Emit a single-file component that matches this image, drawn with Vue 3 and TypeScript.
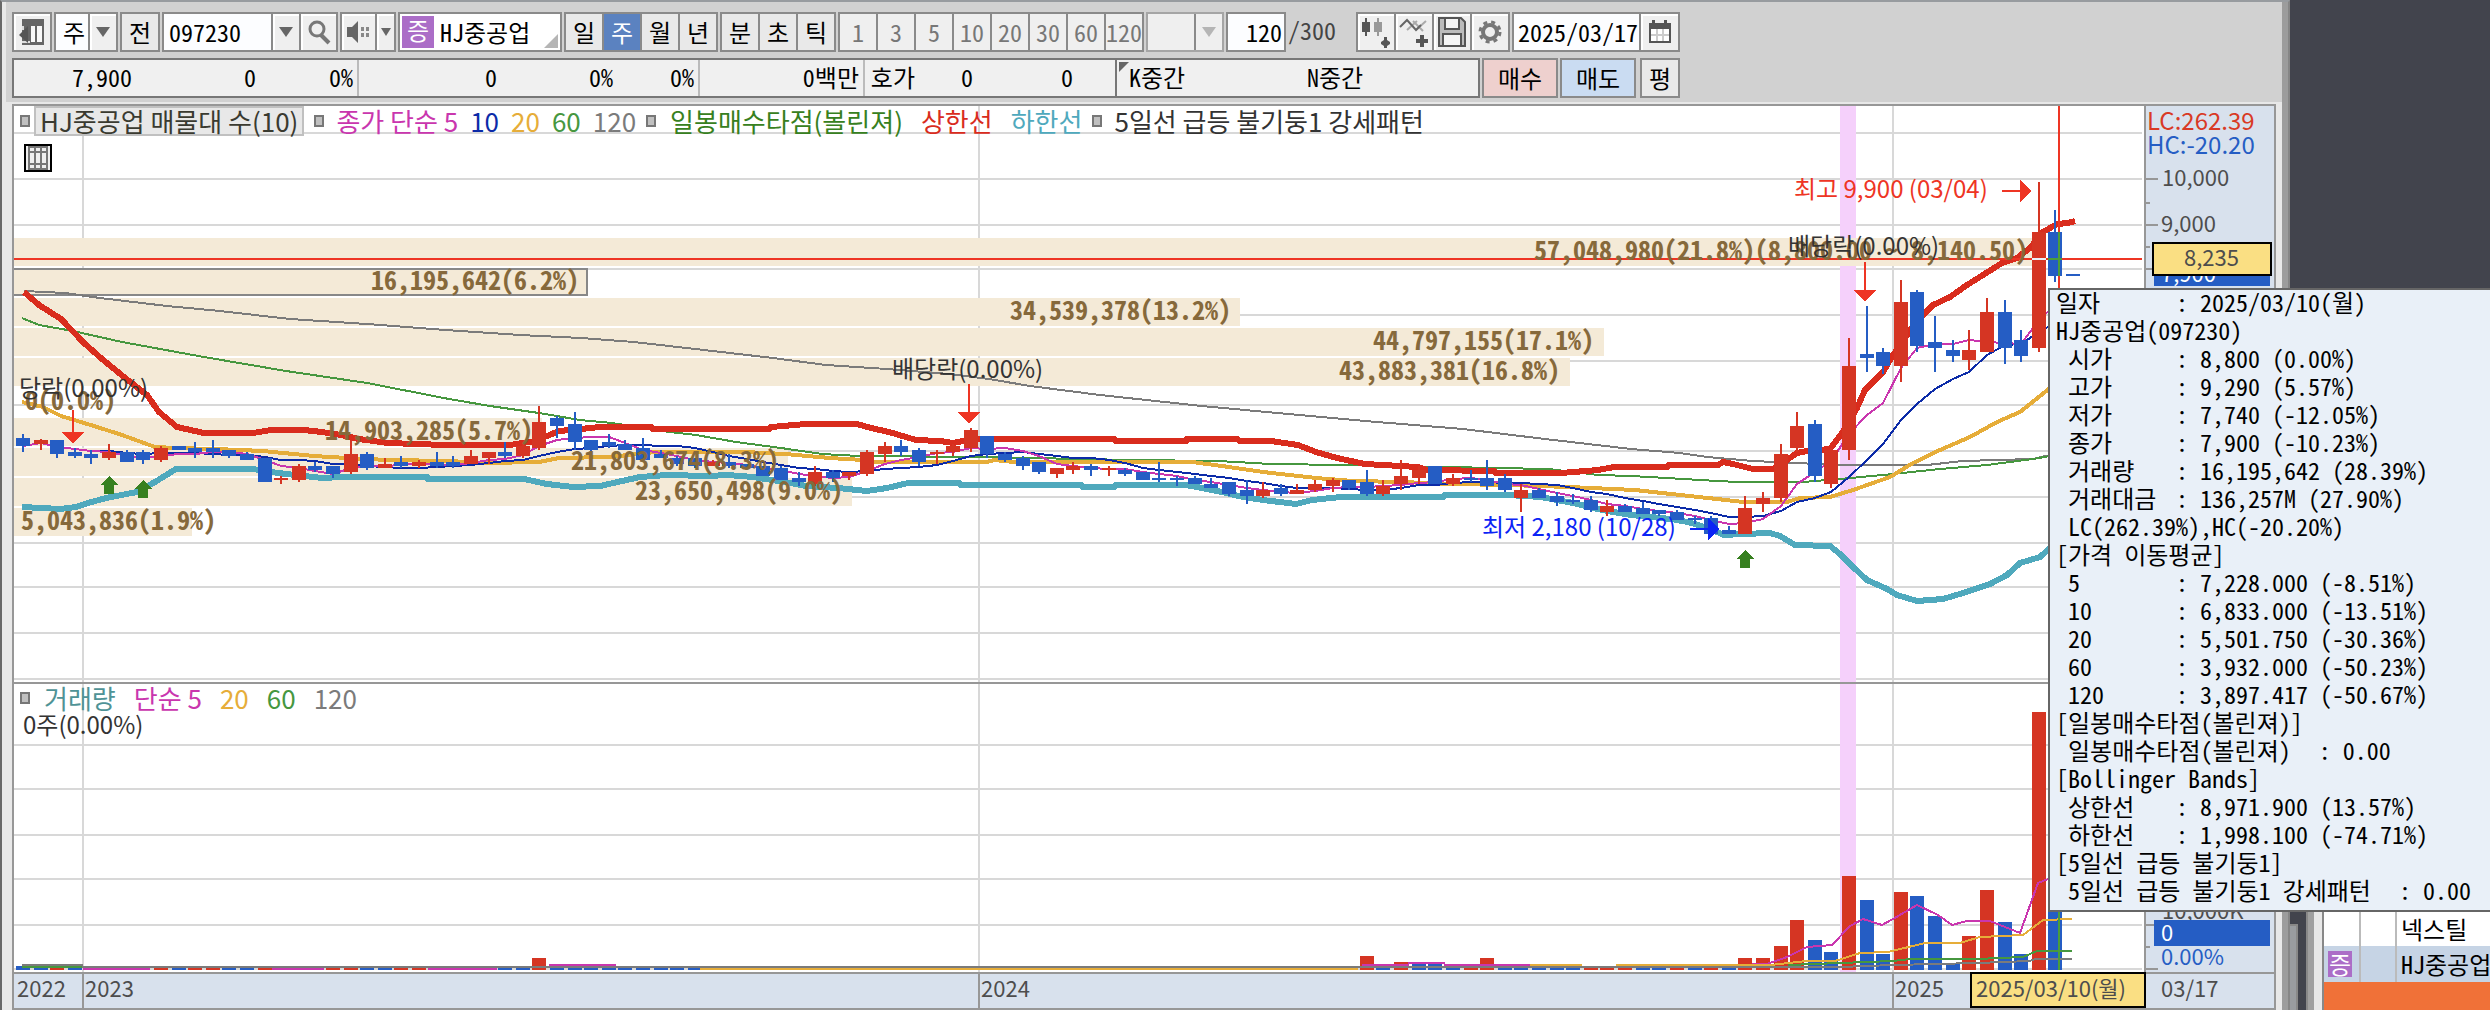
<script setup lang="ts">
import { ref } from 'vue'

type Candle = [high: number, top: number, bottom: number, low: number, up: 0 | 1]
interface Series { color: string; width: number; points: string }

const code = ref('097230')
const barCount = ref('120')
const endDate = ref('2025/03/17')

const periods = ['일', '주', '월', '년']
const intraday = ['분', '초', '틱']
const minutes = ['1', '3', '5', '10', '20', '30', '60', '120']

/* Weekly candles in chart units: high, body top, body bottom, low, rising flag */
const candles: Candle[] = [
  [434, 438, 446, 452, 0], [439, 440, 444, 450, 1], [440, 440, 454, 458, 0], [448, 452, 456, 458, 0],
  [450, 454, 458, 464, 0], [444, 452, 458, 460, 1], [450, 452, 462, 462, 0], [450, 452, 460, 464, 0],
  [446, 448, 460, 462, 1], [446, 446, 450, 450, 0], [442, 448, 452, 458, 0], [440, 448, 452, 458, 0],
  [450, 450, 456, 458, 0], [452, 454, 460, 460, 0], [458, 458, 482, 482, 0], [476, 478, 480, 484, 1],
  [464, 466, 480, 482, 1], [462, 466, 470, 472, 0], [466, 466, 474, 478, 0], [440, 454, 472, 474, 1],
  [452, 454, 468, 470, 0], [458, 464, 468, 468, 1], [456, 462, 466, 468, 0], [460, 462, 466, 468, 1],
  [452, 462, 466, 468, 0], [456, 462, 466, 468, 0], [450, 456, 464, 464, 1], [452, 452, 458, 464, 1],
  [442, 452, 456, 458, 0], [444, 446, 456, 458, 1], [406, 422, 448, 450, 1], [416, 418, 426, 438, 0],
  [412, 424, 442, 450, 0], [440, 440, 450, 458, 0], [434, 442, 446, 448, 0], [440, 444, 450, 450, 0],
  [438, 448, 460, 460, 0], [450, 454, 458, 458, 0], [456, 458, 464, 466, 0], [458, 458, 466, 468, 0],
  [460, 462, 466, 466, 1], [454, 462, 466, 468, 0], [464, 464, 468, 468, 0], [466, 466, 476, 476, 0],
  [466, 468, 480, 480, 0], [472, 478, 482, 486, 0], [466, 472, 484, 486, 1], [470, 472, 478, 482, 0],
  [472, 472, 476, 480, 1], [450, 452, 474, 476, 1], [442, 446, 454, 462, 1], [440, 446, 452, 456, 0],
  [448, 450, 462, 466, 0], [450, 452, 454, 464, 1], [444, 446, 452, 456, 1], [428, 430, 448, 452, 1],
  [436, 436, 454, 458, 0], [452, 454, 460, 462, 0], [456, 458, 466, 470, 0], [462, 462, 472, 474, 0],
  [468, 468, 474, 478, 1], [462, 466, 470, 474, 1], [464, 466, 470, 476, 0], [466, 468, 470, 476, 1],
  [468, 470, 474, 476, 0], [472, 472, 480, 480, 0], [462, 478, 480, 482, 0], [476, 478, 480, 486, 0],
  [476, 478, 484, 484, 0], [478, 484, 488, 488, 0], [482, 482, 494, 496, 0], [480, 490, 496, 504, 0],
  [482, 490, 496, 498, 1], [484, 488, 494, 496, 0], [484, 490, 494, 494, 1], [480, 484, 490, 492, 1],
  [478, 480, 486, 492, 1], [480, 480, 488, 490, 0], [470, 482, 494, 496, 0], [480, 486, 494, 496, 1],
  [460, 476, 484, 490, 1], [466, 470, 478, 484, 1], [466, 466, 484, 484, 0], [474, 478, 484, 486, 1],
  [470, 478, 480, 482, 0], [460, 478, 486, 490, 0], [474, 478, 490, 492, 0], [484, 490, 498, 512, 1],
  [488, 490, 498, 498, 0], [492, 496, 502, 506, 0], [494, 500, 502, 504, 0], [496, 500, 510, 512, 0],
  [500, 506, 512, 516, 1], [504, 506, 512, 512, 0], [502, 508, 514, 514, 0], [510, 510, 514, 516, 0],
  [510, 512, 520, 520, 0], [516, 518, 520, 524, 0], [516, 518, 534, 534, 0], [526, 530, 534, 534, 0],
  [496, 508, 534, 534, 1], [492, 498, 504, 512, 1], [444, 454, 498, 502, 1], [412, 426, 448, 452, 1],
  [420, 424, 476, 482, 0], [448, 450, 484, 488, 1], [338, 366, 450, 460, 1], [306, 354, 358, 372, 0],
  [348, 352, 366, 374, 0], [280, 302, 366, 382, 1], [290, 292, 346, 352, 0], [316, 342, 348, 372, 0],
  [340, 350, 356, 362, 0], [330, 350, 360, 370, 1], [298, 312, 352, 352, 1], [300, 312, 348, 364, 0],
  [330, 340, 356, 362, 0], [182, 232, 348, 352, 1], [210, 232, 276, 282, 0], [274, 274, 276, 276, 0],
]

const centre = (i: number): number => 2 * Math.floor((23 + 17.227 * i) / 2) + 1
const closes = candles.map((c) => (c[4] ? c[1] : c[2]))

function movingAverage(span: number): string {
  return closes
    .slice(0, 119)
    .map((_, i) => {
      const part = closes.slice(Math.max(0, i - span + 1), i + 1)
      return `${centre(i)},${Math.round(part.reduce((a, b) => a + b, 0) / part.length)}`
    })
    .join(' ')
}

const volumeTops: Record<number, number> = {
  0: 966, 30: 958, 78: 956, 80: 962, 81: 964, 82: 964, 85: 958, 100: 958, 101: 958, 102: 946, 103: 920,
  104: 940, 105: 952, 106: 876, 107: 900, 108: 954, 109: 892, 110: 896, 111: 916, 112: 964, 113: 936,
  114: 890, 115: 922, 116: 954, 117: 712, 118: 880,
}
/* Weeks whose volume moved against the price */
const diverging = new Set([1, 2, 10, 11, 14, 18, 21, 22, 29, 78, 79, 81, 83, 84, 85, 87, 91, 93, 96, 98, 105])
const volumes = candles.slice(0, 119).map((c, i) => ({
  x: centre(i),
  top: volumeTops[i] ?? 968,
  up: diverging.has(i) ? !c[4] : !!c[4],
}))

const thinLines: Series[] = [
  { color: '#7b7b7b', width: 2, points: '24,291 65,293 100,298 167,306 220,311 290,319 367,324 445,330 520,335 581,338 634,342 704,350 773,358 826,365 887,369 949,374 989,379 1030,386 1100,395 1202,406 1288,414 1365,421 1463,429 1545,439 1631,449 1680,453 1707,457 1753,461 1840,465 1927,465 1963,461 2033,459 2050,455' },
  { color: '#46973f', width: 2, points: '22,318 39,325 73,331 122,342 204,357 286,371 367,383 449,399 490,406 539,413 580,420 612,423 669,432 696,435 736,442 781,448 822,454 859,456 969,457 1030,458 1132,460 1218,461 1271,464 1345,465 1447,467 1496,468 1549,469 1598,475 1631,476 1667,478 1700,480 1737,482 1803,482 1840,479 1893,474 1940,469 1987,465 2033,459 2050,456' },
  { color: '#e6ad39', width: 4, points: '22,402 43,407 61,416 94,426 122,435 155,447 176,448 216,449 263,451 314,456 347,458 388,460 449,461 486,463 539,462 559,458 610,457 655,452 745,452 785,454 830,458 863,460 875,462 987,462 994,460 1014,462 1192,462 1222,466 1263,472 1316,478 1353,481 1402,482 1451,484 1508,485 1569,487 1635,490 1671,494 1717,499 1743,502 1787,502 1800,498 1830,497 1853,490 1890,477 1913,463 1940,450 1970,437 1997,422 2020,412 2050,388' },
]
const bands: Series[] = [
  { color: '#d92c1d', width: 6, points: '24,292 39,305 61,319 84,343 102,359 124,377 147,395 159,412 177,427 204,433 253,433 271,430 304,430 322,432 341,435 359,439 388,443 445,445 510,445 535,441 559,431 581,429 600,427 651,427 653,429 769,429 771,427 806,424 857,424 871,428 889,432 916,440 940,441 953,443 973,439 1114,439 1116,441 1186,441 1187,439 1237,439 1240,441 1271,441 1298,445 1316,452 1337,458 1365,464 1418,467 1427,470 1494,471 1496,473 1561,473 1598,470 1614,467 1667,467 1669,465 1718,465 1723,462 1733,464 1753,469 1773,469 1787,460 1797,453 1807,451 1830,449 1842,433 1850,420 1857,408 1865,390 1883,372 1893,355 1902,343 1910,330 1925,313 1933,305 1950,297 1967,285 1983,275 2002,263 2017,258 2030,248 2043,232 2057,224 2068,223 2075,221' },
  { color: '#4fa9bd', width: 6, points: '22,507 60,509 76,507 88,503 106,498 137,492 155,482 176,469 253,469 278,473 322,478 342,477 427,477 428,479 524,479 547,484 573,487 600,486 622,481 640,477 667,475 708,476 728,475 753,477 785,482 806,486 838,488 867,491 887,488 908,483 959,483 961,485 1081,485 1083,487 1114,487 1116,485 1186,485 1202,488 1222,492 1243,497 1263,500 1296,504 1312,500 1341,497 1443,497 1445,495 1508,495 1541,497 1573,503 1602,510 1631,515 1671,519 1688,522 1708,528 1724,535 1742,534 1770,533 1780,536 1795,545 1830,546 1840,554 1853,567 1867,580 1887,589 1897,595 1917,601 1943,599 1963,593 1990,584 2007,575 2020,563 2040,557 2050,548' },
]
const volumeLines: Series[] = [
  { color: '#c936ae', width: 2, points: '83,969 150,969' },
  { color: '#c936ae', width: 2, points: '272,969 324,969' },
  { color: '#c936ae', width: 2, points: '428,969 497,969' },
  { color: '#c936ae', width: 2, points: '549,965 616,965' },
  { color: '#e6ad39', width: 2, points: '700,969 1358,969' },
  { color: '#c936ae', width: 2, points: '1362,965 1408,965 1409,963 1444,963 1445,965 1530,965' },
  { color: '#e6ad39', width: 2, points: '1530,965 1582,965' },
  { color: '#c936ae', width: 2, points: '1737,965 1767,964 1787,957 1807,947 1832,945 1850,926 1863,919 1882,925 1893,919 1917,905 1938,915 1952,925 1967,921 1990,921 2020,933 2038,883 2048,879' },
  { color: '#e6ad39', width: 2, points: '1616,965 1770,965 1807,961 1835,961 1860,953 1888,952 1925,943 1960,943 1980,937 2023,935 2043,920 2072,919' },
  { color: '#46973f', width: 2, points: '22,967 82,967' },
  { color: '#46973f', width: 2, points: '1788,965 1840,963 1893,961 1910,959 1977,959 2023,957 2037,951 2072,951' },
  { color: '#7b7b7b', width: 2, points: '22,965 82,965 83,967 1840,967 1893,965 1977,963 2030,961 2035,959 2072,959' },
]

const priceGrid = [133, 179, 225, 269, 315, 361, 405, 451, 497, 543, 587, 633, 679]
const volumeGrid = [745, 789, 835, 879, 925, 969]
const years = [{ x: 83, label: '2023' }, { x: 979, label: '2024' }, { x: 1893, label: '2025' }]

const profile = [
  { y: 238, right: 2040, textX: 2028, label: '57,048,980(21.8%)(8,800.00 ~ 8,140.50)' },
  { y: 268, right: 588, textX: 579, label: '16,195,642(6.2%)', current: true },
  { y: 298, right: 1240, textX: 1231, label: '34,539,378(13.2%)' },
  { y: 328, right: 1604, textX: 1594, label: '44,797,155(17.1%)' },
  { y: 358, right: 1570, textX: 1560, label: '43,883,381(16.8%)' },
  { y: 388, right: 14, textX: 116, label: '0(0.0%)' },
  { y: 418, right: 542, textX: 533, label: '14,903,285(5.7%)' },
  { y: 448, right: 788, textX: 779, label: '21,803,674(8.3%)' },
  { y: 478, right: 852, textX: 843, label: '23,650,498(9.0%)' },
  { y: 508, right: 192, textX: 216, label: '5,043,836(1.9%)' },
]
const dividends = [
  { x: 73, y: 410, tip: 444, textX: 19, textY: 397, label: '당락(0.00%)' },
  { x: 969, y: 384, tip: 424, textX: 892, textY: 378, label: '배당락(0.00%)' },
  { x: 1865, y: 262, tip: 302, textX: 1788, textY: 255, label: '배당락(0.00%)' },
]
const buySignals = [{ x: 109, y: 476 }, { x: 143, y: 480 }, { x: 1745, y: 550 }]

const details: { label: string; value?: string; head?: boolean; free?: boolean }[] = [
  { label: '일자', value: '2025/03/10(월)', head: true },
  { label: 'HJ중공업(097230)', head: true },
  { label: '시가', value: '8,800 (0.00%)' },
  { label: '고가', value: '9,290 (5.57%)' },
  { label: '저가', value: '7,740 (-12.05%)' },
  { label: '종가', value: '7,900 (-10.23%)' },
  { label: '거래량', value: '16,195,642 (28.39%)' },
  { label: '거래대금', value: '136,257M (27.90%)' },
  { label: 'LC(262.39%),HC(-20.20%)' },
  { label: '[가격 이동평균]', head: true },
  { label: '5', value: '7,228.000 (-8.51%)' },
  { label: '10', value: '6,833.000 (-13.51%)' },
  { label: '20', value: '5,501.750 (-30.36%)' },
  { label: '60', value: '3,932.000 (-50.23%)' },
  { label: '120', value: '3,897.417 (-50.67%)' },
  { label: '[일봉매수타점(볼린져)]', head: true },
  { label: '일봉매수타점(볼린져)', value: '0.00', free: true },
  { label: '[Bollinger Bands]', head: true },
  { label: '상한선', value: '8,971.900 (13.57%)' },
  { label: '하한선', value: '1,998.100 (-74.71%)' },
  { label: '[5일선 급등 불기둥1]', head: true },
  { label: '5일선 급등 불기둥1 강세패턴', value: '0.00', free: true },
]
</script>

<template>
  <div class="app">
    <main class="window">
      <header class="toolbars">
        <div class="bar">
          <button class="box icon" aria-label="패널 접기">
            <svg width="26" height="28" viewBox="0 0 26 28"><path d="M3 1h22v26H3z" fill="#666" /><path d="M12 8h4v16h-4zM18 8h5v16h-5z" fill="#f8f8f8" /><path d="M3 8h2v4H3zM3 23h8v2H3z" fill="#ddd" /><path d="M0 17l9-9v17z" fill="#555" /></svg>
          </button>
          <div class="box combo">
            <select class="w34" aria-label="시장"><option>주</option></select>
            <button class="arrow" aria-label="시장 목록"><i></i></button>
          </div>
          <button class="box cell">전</button>
          <div class="box combo">
            <input v-model="code" class="code" aria-label="종목코드" />
            <button class="arrow" aria-label="최근 종목"><i></i></button>
            <button class="tool" aria-label="종목 검색">
              <svg width="28" height="28" viewBox="0 0 28 28" fill="none" stroke="#777"><circle cx="12" cy="11" r="7" stroke-width="3" /><path d="M16 17l8 8" stroke-width="4" /></svg>
            </button>
          </div>
          <div class="box combo">
            <button class="tool speaker" aria-label="소리">
              <svg width="28" height="28" viewBox="0 0 28 28" fill="#666"><path d="M2 9h5l6-6v22l-6-6H2z" /><path d="M16 9h3v4h-3zM16 15h3v4h-3zM21 9h3v4h-3zM21 15h3v4h-3z" fill="#888" /></svg>
            </button>
            <button class="arrow small" aria-label="소리 목록"><i></i></button>
          </div>
          <div class="box name"><b class="badge">증</b><span>HJ중공업</span><i class="corner"></i></div>
          <div class="box group">
            <button v-for="p in periods" :key="p" :class="{ on: p === '주' }">{{ p }}</button>
          </div>
          <div class="box group">
            <button v-for="p in intraday" :key="p">{{ p }}</button>
          </div>
          <div class="box group dim">
            <button v-for="m in minutes" :key="m">{{ m }}</button>
          </div>
          <div class="box combo off">
            <select class="w46" aria-label="사용자 주기" disabled><option></option></select>
            <button class="arrow" disabled aria-label="주기 목록"><i></i></button>
          </div>
          <input v-model="barCount" class="box count" aria-label="봉 개수" />
          <span class="total">/300</span>
          <div class="box group icons">
            <button aria-label="차트 추가">
              <svg width="30" height="32" viewBox="0 0 30 32" fill="#555"><path d="M1 6h8v10H1zM4 2h2v18H4z" /><path d="M13 6h8v10h-8zM16 2h2v18h-2z" fill="#999" /><path d="M20 26l3-2v-3h3v3l3 2v2l-3 2v2h-3v-2l-3-2z" /></svg>
            </button>
            <button aria-label="지표 추가">
              <svg width="30" height="32" viewBox="0 0 30 32" fill="none"><path d="M8 14l10-9M14 5l10 10M17 14l10-9" stroke="#aaa" stroke-width="2" /><path d="M1 11l7-7 9 10 5-5" stroke="#666" stroke-width="2" /><path d="M17 23h4v-4h4v4h4v4h-4v4h-4v-4h-4z" fill="#555" /></svg>
            </button>
            <button aria-label="저장">
              <svg width="30" height="32" viewBox="0 0 30 32" fill="#f4f4f4" stroke="#555" stroke-width="2"><path d="M2 2h22l4 4v24H2z" fill="#bbb" /><path d="M8 2h14v11H8zM6 18h18v12H6z" /></svg>
            </button>
            <button aria-label="설정">
              <svg width="30" height="32" viewBox="0 0 30 32" fill="none" stroke="#777"><circle cx="15" cy="16" r="7" stroke-width="4" /><circle cx="15" cy="16" r="10" stroke-width="3" stroke-dasharray="4 4" /></svg>
            </button>
          </div>
          <div class="box combo">
            <input v-model="endDate" class="date" aria-label="기준일" />
            <button class="tool calendar" aria-label="달력">
              <svg width="26" height="28" viewBox="0 0 26 28"><path d="M2 5h22v20H2z" fill="#555" /><path d="M5 2h3v4H5zM17 2h3v4h-3z" fill="#555" /><path d="M4 11h18v12H4z" fill="#fff" /><path d="M4 16h18v2H4zM9 11h2v12H9zM15 11h2v12h-2z" fill="#ccc" /></svg>
            </button>
          </div>
        </div>

        <div class="bar">
          <div class="box quote">
            <span class="q1">7,900</span><span class="q2">0</span><span class="q3">0%</span>
            <span class="q4">0</span><span class="q5">0%</span><span class="q6">0%</span>
            <span class="q7">0백만</span><span class="q8">호가</span><span class="q9">0</span><span class="q10">0</span>
            <span class="q11">K중간</span><span class="q12">N중간</span>
          </div>
          <button class="box order buy">매수</button>
          <button class="box order sell">매도</button>
          <button class="box cell avg">평</button>
        </div>
      </header>

      <section class="chart">
        <svg class="plot" viewBox="14 106 2260 902" shape-rendering="crispEdges">
          <rect x="14" y="106" width="2130" height="866" fill="#fff" />
          <rect x="2146" y="106" width="128" height="902" fill="#d8e1ed" />
          <rect x="14" y="974" width="2132" height="34" fill="#d8e1ed" />
          <g fill="#d8d8d8">
            <rect v-for="y in priceGrid" :key="y" x="14" :y="y - 1" width="2128" height="2" />
            <rect v-for="y in volumeGrid" :key="y" x="14" :y="y - 1" width="2128" height="2" />
            <rect v-for="t in years" :key="t.x" :x="t.x - 1" y="106" width="2" height="866" />
          </g>
          <rect x="1840" y="106" width="16" height="866" fill="#f5d0fb" />
          <template v-for="b in profile" :key="b.y">
            <rect x="14" :y="b.y" :width="b.right - 14" height="28" fill="#f4ead7" />
            <path v-if="b.current" :d="`M14 ${b.y + 1}H${b.right - 1}V${b.y + 27}H14`" fill="none" stroke="#888" stroke-width="2" />
          </template>

          <g fill="none">
            <polyline v-for="s in thinLines" :key="s.color" :points="s.points" :stroke="s.color" :stroke-width="s.width" />
            <polyline :points="movingAverage(10)" stroke="#0c2ba8" stroke-width="2" />
            <polyline :points="movingAverage(5)" stroke="#c936ae" stroke-width="2" />
            <polyline v-for="s in bands" :key="s.color" :points="s.points" :stroke="s.color" :stroke-width="s.width" stroke-linejoin="round" />
          </g>
          <g v-for="(c, i) in candles" :key="i" :fill="c[4] ? '#d53523' : '#255dc4'">
            <rect :x="centre(i) - 1" :y="c[0]" width="2" :height="c[3] - c[0]" />
            <rect :x="centre(i) - 7" :y="c[1]" width="14" :height="c[2] - c[1]" />
          </g>

          <rect v-for="v in volumes" :key="v.x" :x="v.x - 7" :y="v.top" width="14" :height="970 - v.top" :fill="v.up ? '#d53523' : '#255dc4'" />
          <g fill="none">
            <polyline v-for="(s, i) in volumeLines" :key="i" :points="s.points" :stroke="s.color" :stroke-width="s.width" />
          </g>

          <g fill="#ee3524">
            <path v-for="d in dividends" :key="d.x" :d="`M${d.x - 1} ${d.y}h2V${d.tip - 12}h10l-11 12l-11-12h10z`" />
            <path d="M2002 190h18v-10l12 11l-12 11v-10h-18z" />
            <rect x="14" y="258" width="2128" height="2" />
            <rect x="2058" y="106" width="2" height="864" />
          </g>
          <rect x="2032" y="258" width="14" height="2" fill="#e9f0f8" />
          <path d="M2058 232h2v44h-2zM2048 258h14v2h-14zM2058 880h2v90h-2z" fill="#4a9d3c" />
          <path d="M1690 528h18v-10l12 11l-12 11v-10h-18z" fill="#0b24f5" />
          <path v-for="s in buySignals" :key="s.x" :d="`M${s.x} ${s.y}l9 9h-4v9h-10v-9h-4z`" fill="#378020" />

          <g class="volume-text" fill="#86693b" text-anchor="end">
            <text v-for="b in profile" :key="b.label" :x="b.textX" :y="b.y + 22">{{ b.label }}</text>
          </g>
          <g class="note">
            <text v-for="d in dividends" :key="d.x" :x="d.textX" :y="d.textY" fill="#333">{{ d.label }}</text>
            <text x="1794" y="198" fill="#ee3524">최고 9,900 (03/04)</text>
            <text x="1482" y="536" fill="#0b24f5">최저 2,180 (10/28)</text>
            <text x="2147" y="130" fill="#d93a25">LC:262.39</text>
            <text x="2147" y="154" fill="#255dc4">HC:-20.20</text>
          </g>

          <g fill="#979797">
            <rect x="14" y="682" width="2132" height="2" />
            <rect x="14" y="972" width="2260" height="2" />
            <rect x="2144" y="106" width="2" height="902" />
            <rect v-for="t in years" :key="t.x" :x="t.x - 1" y="974" width="2" height="34" />
            <rect v-for="y in [179, 225, 269, 925, 969]" :key="y" x="2146" :y="y - 1" width="12" height="2" />
            <rect v-for="y in [203, 247, 947]" :key="y" x="2146" :y="y - 1" width="4" height="2" />
          </g>
          <g class="axis" fill="#4d4d4d">
            <text x="2162" y="186">10,000</text>
            <text x="2161" y="232">9,000</text>
            <rect x="2154" y="262" width="116" height="24" fill="#255dc4" />
            <text x="2161" y="282" fill="#fff">7,900</text>
            <rect x="2153" y="243" width="118" height="32" fill="#fadf83" stroke="#000" stroke-width="2" />
            <text x="2184" y="266">8,235</text>
            <text x="2162" y="919">10,000K</text>
            <rect x="2154" y="920" width="116" height="26" fill="#255dc4" />
            <text x="2161" y="941" fill="#fff">0</text>
            <text x="2161" y="965" fill="#255dc4">0.00%</text>
            <text x="2161" y="997">03/17</text>
            <text x="17" y="997">2022</text>
            <text v-for="t in years" :key="t.x" :x="t.x + 2" y="997">{{ t.label }}</text>
            <rect x="1971" y="973" width="174" height="34" fill="#fadf83" stroke="#000" stroke-width="2" />
            <text x="1976" y="997">2025/03/10(월)</text>
          </g>
        </svg>

        <div class="legend price">
          <div class="set"><i></i><button class="picked">HJ중공업 매물대 수(10)</button></div>
          <div class="set ma"><i></i><span class="m">종가 단순 5</span><span class="n">10</span><span class="o">20</span><span class="g">60</span><span class="d">120</span></div>
          <div class="set ma wide"><i></i><span class="v">일봉매수타점(볼린져)</span><span class="r">상한선</span><span class="t">하한선</span></div>
          <div class="set ma"><i></i><span class="k">5일선 급등 불기둥1 강세패턴</span></div>
        </div>
        <button class="gridbtn" aria-label="표 보기">
          <svg width="20" height="24" viewBox="0 0 20 24" fill="none" stroke="#777" stroke-width="2"><path d="M1 1h18v22H1zM1 6h18M1 18h18M7 1v22M13 1v22" /></svg>
        </button>
        <div class="legend volume">
          <div class="set ma wide"><i></i><span class="c">거래량</span><span class="m">단순 5</span><span class="o">20</span><span class="g">60</span><span class="d">120</span></div>
          <div class="now">0주(0.00%)</div>
        </div>
      </section>
    </main>

    <aside class="side">
      <div class="gutter"><div class="thumb"></div></div>
      <table class="watch">
        <tbody>
          <tr><td></td><td></td><td>넥스틸</td></tr>
          <tr class="sel"><td><b class="badge">증</b></td><td></td><td>HJ중공업</td></tr>
          <tr class="hot"><td colspan="3"></td></tr>
        </tbody>
      </table>
    </aside>

    <div class="tip" role="tooltip">
      <div v-for="(d, i) in details" :key="i" class="row" :class="{ head: d.head }">
        <span :class="{ label: d.value && !d.free, free: d.free }">{{ d.label }}</span><span v-if="d.value">: {{ d.value }}</span>
      </div>
    </div>
  </div>
</template>

<style>
body { margin: 0; background: #42444d; }
</style>

<style scoped>
.app {
  position: relative;
  display: flex;
  min-height: 100vh;
  overflow: hidden;
  background: #42444d;
  color: #000;
  font: 24px/28px "Noto Sans Mono CJK KR", "Noto Sans CJK KR", monospace;
}
.app * { box-sizing: border-box; }
button, input, select {
  margin: 0;
  padding: 0;
  border: 0;
  border-radius: 0;
  background: none;
  color: inherit;
  font: inherit;
  appearance: none;
  white-space: nowrap;
}
svg { display: block; }
.window {
  flex: 1;
  min-width: 0;
  display: flex;
  flex-direction: column;
  border-top: 2px solid #979b9f;
  border-left: 2px solid #686868;
  border-right: 2px solid #868686;
  background: #e8e8e8;
  box-shadow: inset -6px 0 #9c9c9c;
}
.toolbars {
  display: flex;
  flex-direction: column;
  gap: 6px;
  margin: 0 6px 0 4px;
  padding: 10px 6px 4px;
  background: #d1d1d1;
}
.bar { display: flex; gap: 2px; height: 40px; }
.box { border: 2px solid #8a8a8a; background: #e9e9e9; flex: none; }
.box.icon { width: 40px; display: grid; place-items: center; box-shadow: inset 2px 2px #fff; background: #efefef; }
.combo { display: flex; background: #fcfdff; }
.arrow, .tool {
  width: 28px;
  display: grid;
  place-items: center;
  border-left: 2px solid #8a8a8a;
  background: #efefef;
  box-shadow: inset 2px 2px #fff;
}
.tool { width: 37px; }
.speaker { width: 33px; border-left: 0; }
.calendar { width: 39px; }
.arrow i { border: 7px solid transparent; border-top: 10px solid #666; border-bottom: 0; }
.arrow.small { width: 19px; }
.arrow.small i { border-width: 8px 5px 0; }
.w34 { width: 32px; text-align: center; padding-left: 4px; }
.w46 { width: 46px; }
.cell { width: 40px; text-align: center; }
.code { width: 107px; padding-left: 5px; }
.off { background: #efefef; border-color: #a5a5a5; }
.off .arrow { box-shadow: none; }
.off .arrow i { border-top-color: #b5b5b5; }
.name { width: 164px; display: flex; align-items: center; gap: 6px; padding-left: 2px; background: #fff; position: relative; }
.badge { width: 32px; height: 32px; background: #ab6dc7; color: #fff; font-weight: 400; text-align: center; }
.corner { position: absolute; right: 2px; bottom: 2px; border: 7px solid transparent; border-right-color: #b5b5b5; border-bottom-color: #b5b5b5; }
.group { display: flex; }
.group button { width: 38px; }
.group button:first-child { width: 36px; }
.group button + button { border-left: 2px solid #8a8a8a; }
.group .on { background: #5b82c0; color: #fff; }
.dim { background: #efefef; color: #777; }
.count { width: 60px; padding-right: 2px; background: #fcfdff; text-align: right; }
.total { width: 66px; line-height: 36px; color: #444; }
.icons { background: #efefef; }
.icons button { display: grid; place-items: center; box-shadow: inset 2px 2px #fff; }
.date { width: 125px; padding-left: 4px; }
.quote { width: 1468px; display: flex; border-color: #777; background: #f0f0f0; line-height: 34px; text-align: right; }
.quote span { padding-right: 4px; }
.q1 { width: 122px; }
.q2 { width: 124px; }
.q3 { width: 99px; border-right: 2px solid #bbb; }
.q4 { width: 142px; }
.q5 { width: 116px; }
.q6 { width: 83px; border-right: 2px solid #bbb; }
.q7 { width: 165px; border-right: 2px solid #bbb; }
.q8 { width: 54px; }
.q9 { width: 58px; }
.q10 { width: 100px; }
.q11 { margin-left: 38px; border-left: 2px solid #777; position: relative; }
.quote .q11 { width: 192px; padding: 0 0 0 12px; text-align: left; }
.q11::before { content: ""; position: absolute; left: 2px; top: 2px; border: 5px solid #666; border-right-color: transparent; border-bottom-color: transparent; }
.q12 { text-align: left; }
.order { width: 76px; }
.buy { background: #eed0ce; }
.sell { background: #cadcf2; }
.avg { margin-left: 2px; }

.chart {
  position: relative;
  margin: 2px 12px 0 10px;
  border: 2px solid #979797;
  background: #fff;
}
.plot { width: 100%; height: auto; overflow: visible; }
.volume-text { font: 700 26px "Noto Sans Mono CJK KR", "Noto Sans CJK KR", monospace; }
.note { font: 24px "Noto Sans CJK KR", sans-serif; }
.axis { font: 22px "Noto Sans CJK KR", sans-serif; }
.legend {
  position: absolute;
  left: 6px;
  font: 26px/30px "Noto Sans CJK KR", sans-serif;
  white-space: nowrap;
}
.price { top: 0; display: flex; gap: 10px; }
.volume { top: 64%; }
.set { display: flex; align-items: center; gap: 4px; height: 30px; }
.set i { width: 10px; height: 12px; border: 2px solid #777; background: #c0c0c0; }
.set.ma { gap: 12px; }
.set.ma.wide { gap: 18px; }
.wide i { margin-right: -4px; }
.picked { height: 30px; line-height: 26px; padding: 0 4px; border: 2px solid #c0c0c0; background: #e8e8e8; color: #3a3a30; }
.now { padding-left: 3px; line-height: 22px; color: #333; font-size: 24px; }
.m { color: #c936ae; }
.n { color: #0c2ba8; }
.o { color: #e6ad39; }
.g { color: #46973f; }
.d { color: #7b7b7b; }
.v { color: #378020; }
.r { color: #d92c1d; }
.t { color: #4fa9bd; }
.k { color: #333; }
.c { color: #4f9396; }
.gridbtn { position: absolute; left: 10px; top: 38px; width: 28px; height: 28px; display: grid; place-items: center; border: 2px solid #000; background: #efefef; overflow: hidden; }

.side { width: 200px; display: flex; align-items: flex-end; overflow: hidden; }
.gutter { width: 34px; height: 98px; flex: none; border-right: 2px solid #888; background: linear-gradient(90deg, #42444d 16px, #888 16px, #888 18px, #a0a0a0 18px, #a0a0a0 24px, #e8e8e8 24px); }
.thumb { width: 8px; height: 86px; margin-top: 12px; background: #999ca0; border: 2px solid #888; border-left: 0; border-bottom: 0; }
.watch { width: 166px; table-layout: fixed; border-collapse: collapse; background: #fff; }
.watch td { height: 34px; padding: 0 0 0 4px; white-space: nowrap; }
.watch td:first-child, .watch td:nth-child(2) { width: 36px; border-right: 2px solid #bbb; }
.watch .sel { background: #c6d4e5; }
.watch .sel td { height: 36px; }
.watch .badge { display: block; width: 24px; height: 26px; line-height: 26px; }
.watch .hot td { height: 28px; background: #f07138; border: 0; }

.tip {
  position: absolute;
  top: 288px;
  right: 0;
  width: 442px;
  height: 624px;
  padding-left: 6px;
  border: 2px solid #666;
  border-right: 0;
  background: #e9f0f8;
  line-height: 24px;
  white-space: pre;
}
.row { display: flex; height: 28px; padding-left: 12px; }
.row.head { padding-left: 0; }
.label { width: 108px; }
.head .label { width: 120px; }
.free { margin-right: 28px; }
</style>
